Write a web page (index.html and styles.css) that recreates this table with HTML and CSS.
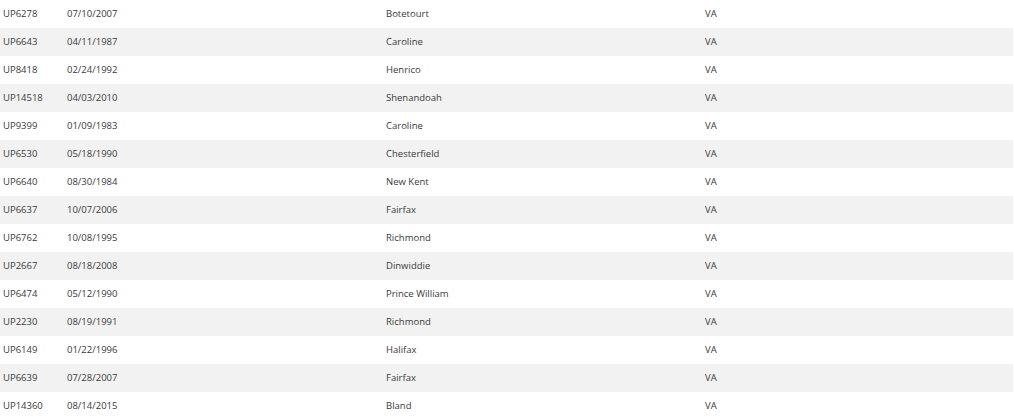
FILE: index.html
```html
<!DOCTYPE html>
<html>
<head>
<meta charset="utf-8">
<link rel="stylesheet" href="styles.css">
</head>
<body>
<table class="grid">
<colgroup><col class="c1"><col class="c2"><col class="c3"><col class="c4"></colgroup>
<tbody>
<tr><td>UP6278</td><td>07/10/2007</td><td>Botetourt</td><td>VA</td></tr>
<tr><td>UP6643</td><td>04/11/1987</td><td>Caroline</td><td>VA</td></tr>
<tr><td>UP8418</td><td>02/24/1992</td><td>Henrico</td><td>VA</td></tr>
<tr><td>UP14518</td><td>04/03/2010</td><td>Shenandoah</td><td>VA</td></tr>
<tr><td>UP9399</td><td>01/09/1983</td><td>Caroline</td><td>VA</td></tr>
<tr><td>UP6530</td><td>05/18/1990</td><td>Chesterfield</td><td>VA</td></tr>
<tr><td>UP6640</td><td>08/30/1984</td><td>New Kent</td><td>VA</td></tr>
<tr><td>UP6637</td><td>10/07/2006</td><td>Fairfax</td><td>VA</td></tr>
<tr><td>UP6762</td><td>10/08/1995</td><td>Richmond</td><td>VA</td></tr>
<tr><td>UP2667</td><td>08/18/2008</td><td>Dinwiddie</td><td>VA</td></tr>
<tr><td>UP6474</td><td>05/12/1990</td><td>Prince William</td><td>VA</td></tr>
<tr><td>UP2230</td><td>08/19/1991</td><td>Richmond</td><td>VA</td></tr>
<tr><td>UP6149</td><td>01/22/1996</td><td>Halifax</td><td>VA</td></tr>
<tr><td>UP6639</td><td>07/28/2007</td><td>Fairfax</td><td>VA</td></tr>
<tr><td>UP14360</td><td>08/14/2015</td><td>Bland</td><td>VA</td></tr>
</tbody>
</table>
</body>
</html>
```
FILE: styles.css
```css
html, body {
  margin: 0;
  padding: 0;
  background: #fff;
  overflow: hidden;
}
.grid {
  width: 1013px;
  border-collapse: collapse;
  table-layout: fixed;
  font-family: "Open Sans", sans-serif;
  font-size: 9.5px;
  color: #3a3a3a;
}
.c1 { width: 64px; }
.c2 { width: 319px; }
.c3 { width: 319px; }
.c4 { width: 311px; }
.grid td {
  height: 28px;
  padding: 0 3px 1px;
  vertical-align: middle;
  white-space: nowrap;
  box-sizing: border-box;
  line-height: 14px;
}
.grid tr:nth-child(even) td {
  background: #f2f2f2;
}
```
